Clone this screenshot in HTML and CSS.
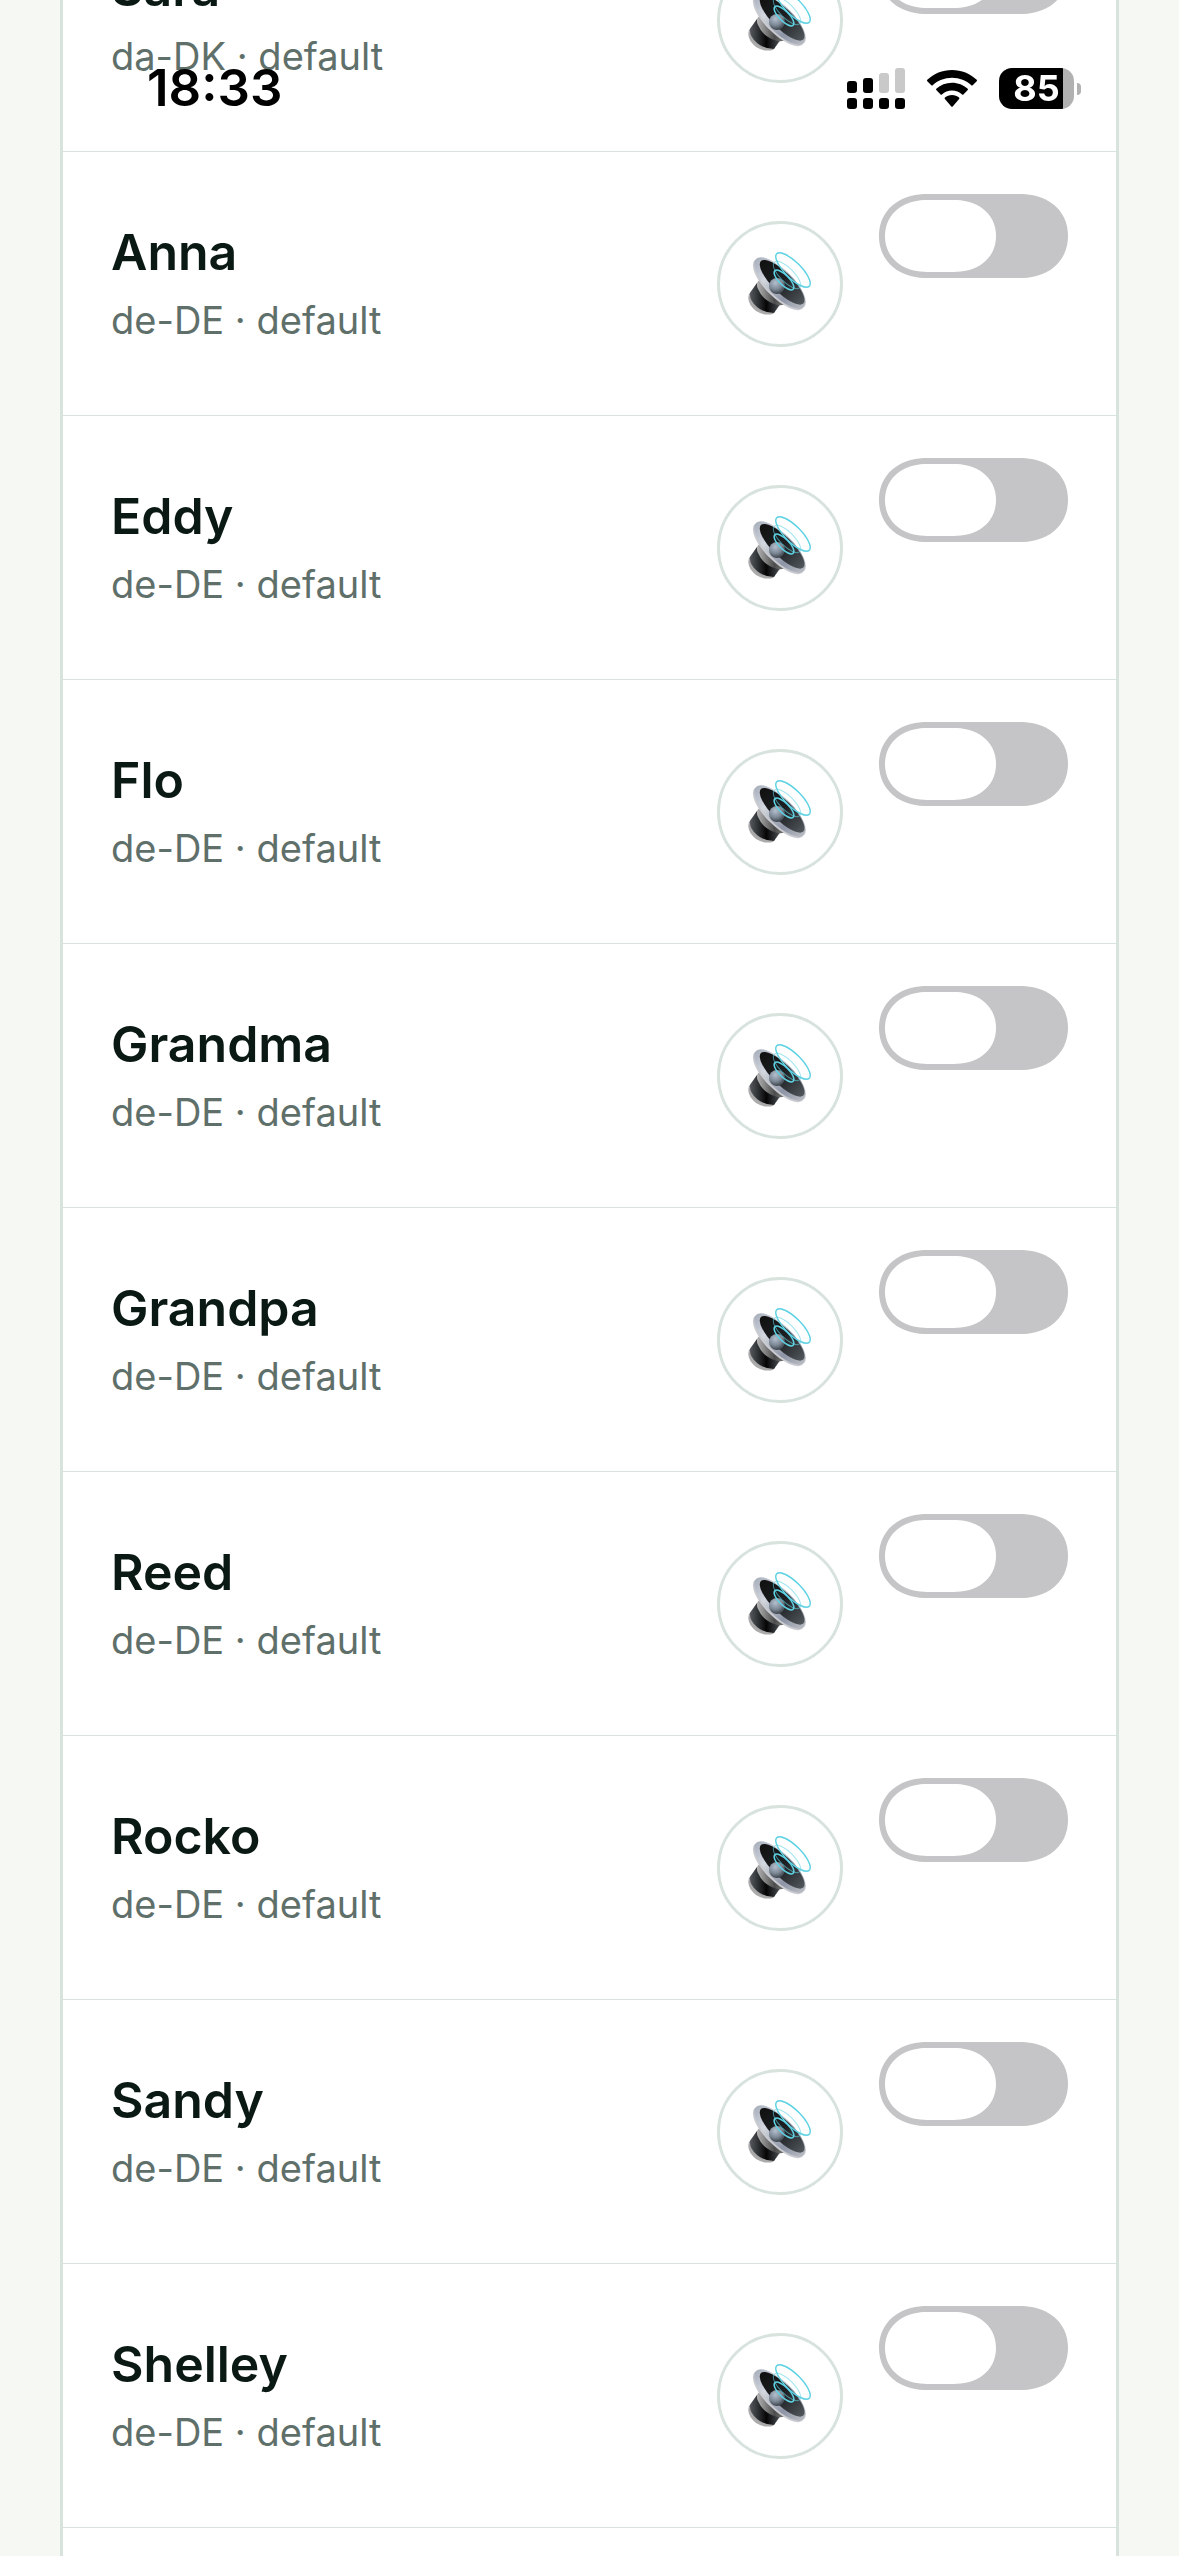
FILE: index.html
```
<!DOCTYPE html>
<html lang="en">
<head>
    <meta charset="UTF-8">
    <meta name="viewport" content="width=device-width, initial-scale=1.0">
    <title>Voices</title>
    <link rel="stylesheet" href="styles.css">
</head>
<body>
    <header class="status-bar">
        <span class="time">18:33</span>
        <div class="status-icons">
            <svg class="signal" viewBox="0 0 58 41" width="58" height="41">
                <g fill="#c9c9c9">
                    <rect x="32" y="5" width="10" height="20" rx="3"/>
                    <rect x="48" y="0" width="10" height="25" rx="3"/>
                </g>
                <rect x="0" y="13" width="10" height="12" rx="3"/>
                <rect x="16" y="10" width="10" height="15" rx="3"/>
                <rect x="0" y="30" width="10" height="11" rx="3"/>
                <rect x="16" y="30" width="10" height="11" rx="3"/>
                <rect x="32" y="30" width="10" height="11" rx="3"/>
                <rect x="48" y="30" width="10" height="11" rx="3"/>
            </svg>
            <svg class="wifi" viewBox="0 0 50 37" width="50" height="37">
                <path d="M25 0C15.500 0 6.700 3.700.300 9.800c-.4.400-.4 1 0 1.400l4 4c.4.400 1 .4 1.400 0C10.800 10.700 17.500 7.800 25 7.800s14.200 2.900 19.300 7.400c.4.400 1 .4 1.400 0l4-4c.4-.4.4-1 0-1.400C43.300 3.700 34.500 0 25 0z"/>
                <path d="M25 12.700c-6 0-11.500 2.300-15.700 6-.4.400-.4 1 0 1.400l4.300 4.300c.4.400.9.400 1.300 0 2.700-2.400 6.200-3.900 10.100-3.900s7.400 1.500 10.100 3.900c.4.400.9.400 1.300 0l4.300-4.300c.4-.4.4-1 0-1.400-4.200-3.700-9.700-6-15.700-6z"/>
                <path d="M25 25c-2.700 0-5.200 1-7.100 2.600-.4.400-.4 1 0 1.400l6.400 7.400c.4.400 1 .4 1.400 0l6.400-7.400c.4-.4.4-1 0-1.400C30.200 26 27.700 25 25 25z"/>
            </svg>
            <div class="battery"><span>85</span></div>
        </div>
    </header>

    <main class="voice-list" id="voice-list">
        <!-- Voice rows are inserted here -->
    </main>

    <!-- Speaker icon shared by all preview buttons -->
    <svg class="sprite" aria-hidden="true">
        <defs>
            <linearGradient id="rim" x1="0" y1="0" x2="1" y2="0">
                <stop offset="0" stop-color="#a9b0bd"/>
                <stop offset=".3" stop-color="#d3d8e0"/>
                <stop offset=".7" stop-color="#8d94a6"/>
                <stop offset="1" stop-color="#b9bcc2"/>
            </linearGradient>
            <linearGradient id="cone" x1="0" y1="0" x2="1" y2="0">
                <stop offset="0" stop-color="#111"/>
                <stop offset=".5" stop-color="#1d1f22"/>
                <stop offset="1" stop-color="#50565b"/>
            </linearGradient>
            <linearGradient id="neck" x1="0" y1="0" x2="1" y2="0">
                <stop offset="0" stop-color="#b5b5b5"/>
                <stop offset=".4" stop-color="#4c4c4c"/>
                <stop offset="1" stop-color="#c9c9c9"/>
            </linearGradient>
            <linearGradient id="magnet" x1="0" y1="0" x2="1" y2="0">
                <stop offset="0" stop-color="#55585c"/>
                <stop offset=".3" stop-color="#2a2d30"/>
                <stop offset=".55" stop-color="#050505"/>
                <stop offset="1" stop-color="#4a4f55"/>
            </linearGradient>
            <radialGradient id="dome" cx=".4" cy=".3" r=".7">
                <stop offset="0" stop-color="#b4c0cd"/>
                <stop offset=".6" stop-color="#7b8794"/>
                <stop offset="1" stop-color="#3d444b"/>
            </radialGradient>
        </defs>
        <symbol id="speaker" viewBox="0 0 64 64">
            <path d="M9 31L1 42q-3 9 7 17 8 5 17 3l7-9z" fill="#aaa"/>
            <path d="M9 31L2 41q-1 7 7 14 7 6 17 6l6-9z" fill="url(#magnet)"/>
            <path d="M12 27q-5 4-2 10 5 12 19 16 5 1 8-1l16 4-38-36z" fill="url(#neck)"/>
            <g transform="rotate(45 32 31)">
                <ellipse cx="32" cy="33" rx="34" ry="13" fill="#c9cbd0"/>
                <ellipse cx="32" cy="31" rx="34" ry="13" fill="url(#rim)"/>
                <ellipse cx="33" cy="29" rx="30" ry="10" fill="url(#cone)"/>
            </g>
            <circle cx="29" cy="34" r="8" fill="url(#dome)"/>
            <g fill="none" stroke="#5fd3e3">
                <ellipse cx="36" cy="28" rx="13" ry="5" stroke-width="1.500" transform="rotate(45 36 28)"/>
                <ellipse cx="39" cy="23" rx="18" ry="7" stroke-width="1" opacity=".6" transform="rotate(45 39 23)"/>
                <ellipse cx="45" cy="18" rx="23" ry="8" stroke-width="1.500" transform="rotate(45 45 18)"/>
            </g>
        </symbol>
    </svg>

    <script>
        const voices = [
            { name: 'Sara', lang: 'da-DK' },
            { name: 'Anna', lang: 'de-DE' },
            { name: 'Eddy', lang: 'de-DE' },
            { name: 'Flo', lang: 'de-DE' },
            { name: 'Grandma', lang: 'de-DE' },
            { name: 'Grandpa', lang: 'de-DE' },
            { name: 'Reed', lang: 'de-DE' },
            { name: 'Rocko', lang: 'de-DE' },
            { name: 'Sandy', lang: 'de-DE' },
            { name: 'Shelley', lang: 'de-DE' }
        ];

        const list = document.getElementById('voice-list');

        voices.forEach((voice, index) => {
            const row = document.createElement('div');
            row.classList.add('voice-row');
            row.innerHTML = `
                <label class="voice-info" for="voice-${index}">
                    <span class="voice-name">${voice.name}</span>
                    <span class="voice-meta">${voice.lang} · default</span>
                </label>
                <button class="preview-btn" type="button" aria-label="Preview ${voice.name}">
                    <svg width="64" height="64"><use href="#speaker"/></svg>
                </button>
                <input class="switch" type="checkbox" id="voice-${index}">
            `;
            list.appendChild(row);
        });
    </script>
</body>
</html>
```
FILE: styles.css
```
* {
    box-sizing: border-box;
}

body {
    display: flex;
    flex-direction: column;
    min-height: 100vh;
    margin: 0;
    padding: 0 60px;
    background-color: #f5f8f3;
    font-family: Inter, "Liberation Sans", sans-serif;
}

/* Status bar floats over the scrolled list */
.status-bar {
    position: fixed;
    top: 0;
    left: 0;
    right: 0;
    z-index: 1;
    display: flex;
    justify-content: space-between;
    align-items: center;
    padding: 56px 105px 0 147px;
    color: #000;
}

.time {
    font-size: 51px;
    font-weight: 600;
    line-height: 64px;
}

.status-icons {
    display: flex;
    align-items: center;
    gap: 22px;
}

.battery {
    position: relative;
    width: 75px;
    height: 41px;
    border-radius: 13px;
    background: linear-gradient(to right, #000 64px, #b1b1b1 64px);
    color: white;
    font-size: 36px;
    font-weight: 700;
    line-height: 41px;
    text-align: center;
}

.battery::after {
    content: "";
    position: absolute;
    top: 15px;
    right: -7px;
    width: 4px;
    height: 12px;
    border-radius: 0 4px 4px 0;
    background-color: #b1b1b1;
}

/* First row is scrolled partly out of view */
.voice-list {
    flex: 1;
    margin-top: -112px;
    border: 3px solid #d8e3de;
    border-width: 0 3px;
    background-color: white;
}

.voice-row {
    display: flex;
    align-items: center;
    gap: 36px;
    min-height: 264px;
    padding: 42px 48px;
    border-bottom: 1px solid #d8e3de;
}

.voice-info {
    display: flex;
    flex: 1;
    flex-direction: column;
    gap: 2px;
    padding-bottom: 2px;
}

.voice-name {
    color: #0b1915;
    font-size: 50px;
    font-weight: 600;
    line-height: 72px;
}

.voice-meta {
    color: #5f6f6a;
    font-size: 38px;
    line-height: 60px;
}

.preview-btn {
    display: flex;
    align-items: center;
    justify-content: center;
    width: 126px;
    height: 126px;
    padding: 0;
    border: 3px solid #d8e3de;
    border-radius: 50%;
    background-color: white;
    cursor: pointer;
}

.switch {
    appearance: none;
    align-self: flex-start;
    width: 189px;
    height: 84px;
    margin: 0;
    padding: 6px;
    border-radius: 48px / 42px;
    corner-shape: superellipse(1.1);
    background-color: #c5c5c7;
    cursor: pointer;
}

.switch::before {
    content: "";
    display: block;
    width: 111px;
    height: 72px;
    border-radius: 42px / 36px;
    corner-shape: superellipse(1.1);
    background-color: white;
}

.switch:checked {
    background-color: #34c759;
}

.switch:checked::before {
    margin-left: auto;
}

.sprite {
    position: absolute;
    width: 0;
    height: 0;
}
```
